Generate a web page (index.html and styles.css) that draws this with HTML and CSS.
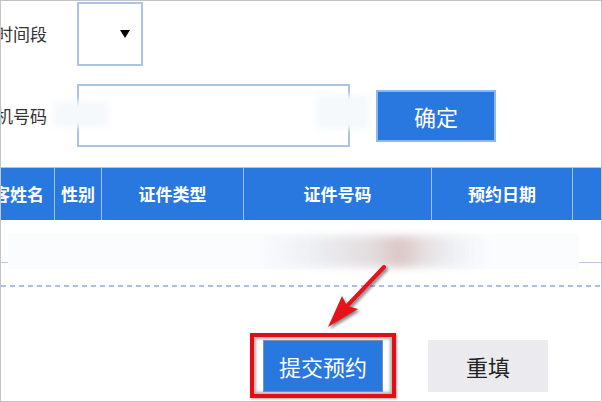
FILE: index.html
```html
<!DOCTYPE html>
<html lang="zh-CN">
<head>
<meta charset="utf-8">
<title>提交预约</title>
<link rel="stylesheet" href="styles.css">
</head>
<body>
<div class="frame">
  <div class="field field-time">
    <div class="label"><span>时间段</span></div>
    <div class="select"><span class="caret"></span></div>
  </div>
  <div class="field field-phone">
    <div class="label"><span>手机号码</span></div>
    <div class="input"></div>
    <button class="btn btn-blue btn-ok">确定</button>
  </div>

  <div class="table">
    <div class="th c1">旅客姓名</div>
    <div class="th">性别</div>
    <div class="th">证件类型</div>
    <div class="th">证件号码</div>
    <div class="th">预约日期</div>
    <div class="th"></div>
  </div>
  <div class="tbody"></div>
  <div class="dash"></div>

  <div class="actions">
    <button class="btn btn-blue btn-submit">提交预约</button>
    <button class="btn btn-gray">重填</button>
  </div>

  <div class="smudge smudge-a"></div>
  <div class="smudge smudge-b"></div>
  <div class="band"><div class="band-core"></div></div>

  <svg class="arrow" width="602" height="402" viewBox="0 0 602 402" xmlns="http://www.w3.org/2000/svg">
    <line x1="384" y1="267" x2="347" y2="306" stroke="#e8121a" stroke-width="4" stroke-linecap="round"/>
    <polygon points="328,327 342,296 347,306 358,309" fill="#e8121a"/>
  </svg>
  <div class="mark"></div>
</div>
</body>
</html>
```
FILE: styles.css
```css
html, body {
  margin: 0;
  padding: 0;
  background: #fff;
}
body {
  font-family: "Noto Sans CJK SC", "Noto Sans", sans-serif;
}
.frame {
  position: relative;
  width: 602px;
  height: 402px;
  box-sizing: border-box;
  border: 1px solid #c4c4c4;
  overflow: hidden;
  background: #fff;
}
.field {
  display: flex;
  align-items: center;
}
.field-time {
  margin-top: 1px;
  height: 64px;
}
.field-phone {
  margin-top: 18px;
  height: 63px;
}
.label {
  flex: 0 0 46px;
  width: 46px;
  min-width: 0;
  display: flex;
  justify-content: flex-end;
  white-space: nowrap;
  font-size: 17px;
  line-height: 20px;
  color: #333;
  margin-right: 30px;
}
.label span {
  flex: 0 0 auto;
}
.select {
  flex: 0 0 66px;
  width: 66px;
  height: 64px;
  box-sizing: border-box;
  border: 2px solid #a9c4e4;
  display: flex;
  align-items: center;
  justify-content: flex-end;
  padding-right: 11px;
}
.caret {
  width: 0;
  height: 0;
  border-left: 5px solid transparent;
  border-right: 5px solid transparent;
  border-top: 8px solid #000;
}
.input {
  flex: 0 0 273px;
  width: 273px;
  height: 63px;
  box-sizing: border-box;
  border: 2px solid #a9c4e4;
}
.btn {
  flex: 0 0 120px;
  width: 120px;
  height: 52px;
  box-sizing: border-box;
  font-family: "Noto Sans CJK SC", sans-serif;
  font-size: 22px;
  line-height: 26px;
  padding: 0;
  margin: 0;
  cursor: pointer;
}
.btn-blue {
  background: #2878e0;
  color: #fff;
  border: 2px solid #8cb8f0;
}
.btn-ok {
  margin-left: 26px;
}
.btn-submit {
  border: 1px solid #7e93b3;
}
.btn-gray {
  background: #ebebef;
  color: #222;
  border: none;
}
.table {
  margin-top: 20px;
  margin-left: -25px;
  display: grid;
  grid-template-columns: 78px 47px 142px 188px 141px 68px;
  height: 53px;
  box-sizing: border-box;
  border-top: 1px solid #a8c6ec;
  background: #2878e0;
}
.th {
  display: flex;
  align-items: center;
  justify-content: center;
  border-left: 1px solid #9fc2ef;
  color: #fff;
  font-weight: bold;
  font-size: 17px;
  line-height: 20px;
  white-space: nowrap;
}
.th.c1 {
  border-left: none;
  justify-content: flex-end;
  padding-right: 10px;
}
.tbody {
  height: 42px;
  border-bottom: 1px solid #b3cbe8;
}
.dash {
  margin-top: 22px;
  height: 2px;
  background: repeating-linear-gradient(to right, #a9c1e5 0 5px, transparent 5px 9px);
}
.actions {
  display: flex;
  align-items: center;
  gap: 45px;
  margin-top: 53px;
  padding-left: 262px;
}
.smudge {
  position: absolute;
  background: #f6f9fc;
  filter: blur(3px);
}
.smudge-a {
  left: 52px;
  top: 100px;
  width: 56px;
  height: 26px;
}
.smudge-b {
  left: 314px;
  top: 94px;
  width: 54px;
  height: 34px;
}
.band {
  position: absolute;
  left: 7px;
  top: 233px;
  width: 571px;
  height: 35px;
  background: #fbfcfe;
}
.band-core {
  position: absolute;
  left: 250px;
  top: 2px;
  width: 230px;
  height: 31px;
  background: linear-gradient(to right, rgba(238,240,244,0) 0%, #eceef2 25%, #e2dcdd 50%, #dcc6c6 62%, #e6dfe0 72%, #eef0f3 85%, rgba(240,242,245,0) 100%);
  filter: blur(4px);
}
.arrow {
  position: absolute;
  left: -1px;
  top: -1px;
  filter: drop-shadow(2px 2px 1.5px rgba(40,40,40,0.55));
}
.mark {
  position: absolute;
  left: 249px;
  top: 332px;
  width: 146px;
  height: 65px;
  box-sizing: border-box;
  border: 4px solid #e60d12;
  box-shadow: inset 0 0 3px 2px rgba(110,110,120,0.55), 1px 1px 2px rgba(0,0,0,0.35);
}
```
